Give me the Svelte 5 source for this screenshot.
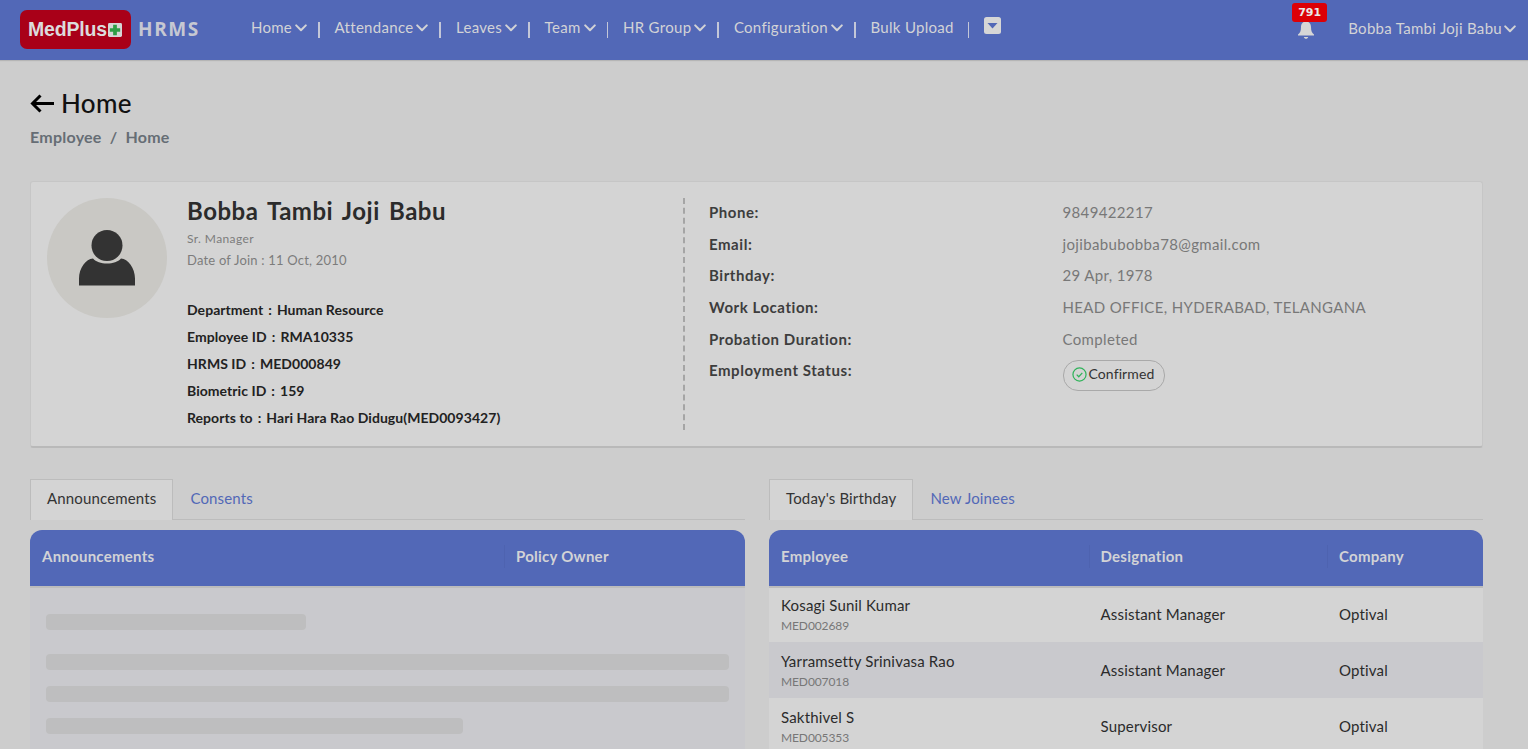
<script lang="ts">
	const menu = [
		{ label: 'Home', caret: true },
		{ label: 'Attendance', caret: true },
		{ label: 'Leaves', caret: true },
		{ label: 'Team', caret: true },
		{ label: 'HR Group', caret: true },
		{ label: 'Configuration', caret: true },
		{ label: 'Bulk Upload', caret: false }
	];

	const details = [
		['Department', 'Human Resource'],
		['Employee ID', 'RMA10335'],
		['HRMS ID', 'MED000849'],
		['Biometric ID', '159'],
		['Reports to', 'Hari Hara Rao Didugu(MED0093427)']
	];

	const contact = [
		['Phone', '9849422217'],
		['Email', 'jojibabubobba78@gmail.com'],
		['Birthday', '29 Apr, 1978'],
		['Work Location', 'HEAD OFFICE, HYDERABAD, TELANGANA'],
		['Probation Duration', 'Completed']
	];

	const birthdays = [
		{ name: 'Kosagi Sunil Kumar', id: 'MED002689', role: 'Assistant Manager', company: 'Optival' },
		{ name: 'Yarramsetty Srinivasa Rao', id: 'MED007018', role: 'Assistant Manager', company: 'Optival' },
		{ name: 'Sakthivel S', id: 'MED005353', role: 'Supervisor', company: 'Optival' }
	];
</script>

{#snippet caret()}
	<svg class="caret" viewBox="0 0 12 8" width="12" height="8">
		<path d="M1.2 1.4 6 6.2l4.8-4.8" fill="none" stroke="currentColor" stroke-width="2" stroke-linecap="round" stroke-linejoin="round" />
	</svg>
{/snippet}

<header class="navbar">
	<div class="logo">
		<span class="logo-text">MedPlus</span>
		<svg viewBox="0 0 15 15" width="14" height="14">
			<rect width="15" height="15" rx="1.5" fill="#d6d6d6" />
			<path d="M5.500 2h4v3.500H13v4H9.500V13h-4V9.500H2v-4h3.500z" fill="#2e9e45" />
		</svg>
	</div>
	<span class="hrms">HRMS</span>
	<nav class="menu">
		{#each menu as item}
			<span class="menu-item" class:plain={!item.caret}>{item.label}{#if item.caret}{@render caret()}{/if}</span>
			<span class="sep"></span>
		{/each}
		<svg class="more" viewBox="0 0 17 17" width="17" height="17">
			<rect width="17" height="17" rx="2.5" fill="#d6d6d6" />
			<path d="M3.500 6h10l-5 5.500z" fill="#5268b7" />
		</svg>
	</nav>
	<div class="bell">
		<svg viewBox="0 0 18 20" width="18" height="20">
			<path d="M9 1.500c-3.400 0-5 2.600-5 5.500 0 4-1 6-3 7.500v1h16v-1c-2-1.500-3-3.500-3-7.500 0-2.900-1.600-5.500-5-5.500z" fill="#d6d6d6" />
			<path d="M6.800 17h4.400c-.3 1.200-1.100 1.800-2.200 1.800S7.100 18.200 6.800 17z" fill="#d6d6d6" />
		</svg>
		<span class="badge">791</span>
	</div>
	<span class="user">Bobba Tambi Joji Babu{@render caret()}</span>
</header>

<main class="page">
	<h1 class="title">
		<svg viewBox="0 0 24 20" width="24" height="21">
			<path d="M24 10H2.500M10.500 2l-8 8 8 8" fill="none" stroke="#000" stroke-width="3" />
		</svg>
		Home
	</h1>
	<div class="crumbs"><span>Employee</span><span>/</span><span>Home</span></div>

	<section class="profile">
		<div class="left">
			<div class="avatar">
				<svg viewBox="0 0 56 56" width="56" height="56">
					<circle cx="28" cy="15.500" r="15.500" fill="#333" />
					<path d="M0 55.500v-7C0 38 7 29 14 28.500c3 3.500 8 5 14 5s11-1.500 14-5C49 29 56 38 56 48.500v7z" fill="#333" />
				</svg>
			</div>
			<div class="who">
				<h2>Bobba Tambi Joji Babu</h2>
				<p class="role">Sr. Manager</p>
				<p class="doj">Date of Join : 11 Oct, 2010</p>
				<ul>
					{#each details as [key, value]}
						<li>{key}<span class="colon">:</span>{value}</li>
					{/each}
				</ul>
			</div>
		</div>
		<div class="right">
			{#each contact as [key, value]}
				<div class="row">
					<span class="key">{key}:</span>
					<span class="val">{value}</span>
				</div>
			{/each}
			<div class="row">
				<span class="key">Employment Status:</span>
				<span class="pill">
					<svg viewBox="0 0 16 16" width="15" height="15">
						<circle cx="8" cy="8" r="7" fill="none" stroke="#2fb35a" stroke-width="1.300" />
						<path d="M5 8.200l2.200 2.200L11 6.200" fill="none" stroke="#2fb35a" stroke-width="1.300" />
					</svg>
					Confirmed
				</span>
			</div>
		</div>
	</section>

	<div class="columns">
		<section>
			<div class="tabs">
				<span class="tab active">Announcements</span>
				<span class="tab">Consents</span>
			</div>
			<div class="thead announce">
				<span>Announcements</span>
				<span class="cell-sep">Policy Owner</span>
			</div>
			<div class="skeleton">
				<div class="bone first"></div>
				<div class="bone"></div>
				<div class="bone"></div>
				<div class="bone short"></div>
			</div>
		</section>
		<section>
			<div class="tabs">
				<span class="tab active">Today's Birthday</span>
				<span class="tab">New Joinees</span>
			</div>
			<div class="thead people">
				<span>Employee</span>
				<span class="cell-sep">Designation</span>
				<span class="cell-sep">Company</span>
			</div>
			{#each birthdays as person, i}
				<div class="tr" class:alt={i % 2 === 1}>
					<div>
						<div class="name">{person.name}</div>
						<div class="emp-id">{person.id}</div>
					</div>
					<div>{person.role}</div>
					<div>{person.company}</div>
				</div>
			{/each}
		</section>
	</div>
</main>

<style>
	:global(body) {
		background: #cdcdcd;
		font-family: Lato, 'Noto Sans', sans-serif;
		color: #222;
		overflow: hidden;
		height: 749px;
	}

	.navbar {
		display: flex;
		align-items: flex-start;
		height: 60px;
		padding: 0 12px 0 20px;
		background: #5268b7;
		box-shadow: 0 1px 1px #b5b5b5;
		color: #d2d3d6;
	}

	.logo {
		display: flex;
		align-items: center;
		gap: 1px;
		width: 111px;
		height: 39px;
		margin-top: 10px;
		padding-left: 8px;
		box-sizing: border-box;
		background: #a90018;
		border-radius: 7px;
	}

	.logo-text {
		font-family: 'Liberation Sans', sans-serif;
		font-size: 19.500px;
		font-weight: 700;
		color: #dcdcdc;
		letter-spacing: -0.2px;
	}

	.hrms {
		font-family: 'Open Sans', sans-serif;
		font-size: 19px;
		font-weight: 700;
		letter-spacing: 1.600px;
		color: #c6c8d2;
		margin: 16px 0 0 7px;
	}

	.menu {
		display: flex;
		align-items: flex-start;
		margin: 18px 0 0 51px;
		font-size: 15px;
		line-height: 18px;
		letter-spacing: 0.3px;
	}

	.menu-item {
		display: flex;
		align-items: center;
		gap: 3px;
		white-space: nowrap;
	}

	.menu-item.plain {
		padding-right: 3px;
	}

	.caret {
		flex: none;
		margin-top: 2px;
	}

	.sep {
		width: 1.500px;
		height: 16px;
		margin: 4px 15px 0 11px;
		background: #c3c7d8;
	}

	.more {
		margin-top: -1px;
	}

	.bell {
		position: relative;
		margin: 20px 0 0 auto;
		height: 20px;
	}

	.badge {
		position: absolute;
		top: -17px;
		left: -5px;
		width: 35px;
		height: 19px;
		background: #dc0006;
		border-radius: 3px;
		color: #e8e8e8;
		font-family: 'DejaVu Sans', sans-serif;
		font-size: 11px;
		font-weight: 700;
		line-height: 20px;
		text-align: center;
	}

	.user {
		display: flex;
		align-items: center;
		gap: 2px;
		margin: 19px 0 0 33px;
		font-size: 15px;
		line-height: 18px;
		letter-spacing: 0.3px;
		white-space: nowrap;
	}

	.page {
		padding: 0 45px 0 30px;
	}

	.title {
		display: flex;
		align-items: center;
		gap: 7px;
		margin: 0;
		padding-top: 28px;
		font-size: 26px;
		line-height: 31px;
		font-weight: 500;
		letter-spacing: 0.3px;
		color: #111;
	}

	.crumbs {
		display: flex;
		gap: 8px;
		margin-top: 8px;
		font-size: 16px;
		line-height: 20px;
		font-weight: 700;
		letter-spacing: 0.25px;
		color: #666d75;
	}

	.profile {
		display: flex;
		height: 267px;
		box-sizing: border-box;
		margin-top: 34px;
		padding: 16px 0 16px 16px;
		background: #d4d4d4;
		border: 1px solid #c6c6c6;
		border-bottom: 2px solid #b9b9b9;
		border-radius: 3px;
	}

	.left {
		display: flex;
		gap: 20px;
		width: 636px;
		border-right: 2px dashed #a5a5a5;
	}

	.avatar {
		flex: none;
		display: flex;
		align-items: center;
		justify-content: center;
		width: 120px;
		height: 120px;
		border-radius: 50%;
		background: #c9c8c4;
	}

	.who h2 {
		margin: 0;
		font-size: 24px;
		line-height: 26px;
		font-weight: 700;
		letter-spacing: 0.5px;
		word-spacing: 3px;
		color: #2b2b2b;
	}

	.role {
		margin: 8px 0 0;
		font-size: 12px;
		line-height: 14px;
		letter-spacing: 0.4px;
		color: #7c7c7c;
	}

	.doj {
		margin: 6px 0 0;
		font-size: 13px;
		line-height: 16px;
		letter-spacing: 0.2px;
		color: #7c7c7c;
	}

	.who ul {
		margin: 28px 0 0;
		padding: 0;
		list-style: none;
		font-size: 14px;
		line-height: 27px;
		font-weight: 700;
		letter-spacing: 0.05px;
		color: #222;
	}

	.colon {
		margin: 0 5px;
	}

	.right {
		flex: 1;
		padding: 5px 0 0 24px;
	}

	.row {
		display: grid;
		grid-template-columns: 353.500px 1fr;
		height: 31.700px;
		align-items: start;
		font-size: 15px;
		line-height: 18px;
		letter-spacing: 0.35px;
	}

	.key {
		font-weight: 700;
		letter-spacing: 0.55px;
		color: #3d3d3d;
	}

	.val {
		color: #787878;
	}

	.pill {
		display: inline-flex;
		align-items: center;
		gap: 2px;
		justify-self: start;
		height: 26px;
		margin-top: -1px;
		padding: 0 10px 3px 8px;
		border: 1px solid #a9a9a9;
		border-radius: 15px;
		font-size: 14px;
		line-height: 26px;
		letter-spacing: 0.1px;
		color: #333;
	}

	.pill svg {
		margin-top: 1px;
	}

	.columns {
		display: grid;
		grid-template-columns: 715px 714px;
		gap: 24px;
		margin-top: 31px;
	}

	.tabs {
		display: flex;
		height: 41px;
		box-sizing: border-box;
		border-bottom: 1px solid #bcbcbc;
		font-size: 15px;
		letter-spacing: 0.15px;
	}

	.tab {
		height: 41px;
		box-sizing: border-box;
		padding: 9px 16px 0;
		line-height: 18px;
		color: #5268b7;
		border: 1px solid transparent;
		border-bottom: 0;
	}

	.tab.active {
		color: #333;
		background: #d4d4d4;
		border-color: #bcbcbc;
	}

	.thead {
		position: relative;
		display: grid;
		height: 56px;
		margin-top: 10px;
		box-sizing: border-box;
		padding-top: 15px;
		background: #5268b7;
		border-radius: 12px 12px 0 0;
		color: #d2d3d6;
		font-size: 15px;
		font-weight: 700;
		line-height: 23px;
		letter-spacing: 0.25px;
		box-shadow: 0 2px 0 #bcbcbc;
	}

	.thead span {
		align-self: start;
		padding-left: 12px;
	}

	.thead .cell-sep {
		padding-left: 11px;
		border-left: 1px solid #4e63b0;
	}

	.announce {
		grid-template-columns: 474px 1fr;
	}

	.people {
		grid-template-columns: 319.500px 238.500px 1fr;
	}

	.skeleton {
		padding: 28px 16px 0;
		height: 200px;
		background: #c9c9cd;
	}

	.bone {
		height: 16px;
		margin-bottom: 16px;
		background: #bebebf;
		border-radius: 4px;
	}

	.bone.first {
		width: 260px;
		margin-bottom: 24px;
	}

	.bone.short {
		width: 417px;
	}

	.tr {
		display: grid;
		grid-template-columns: 319.500px 238.500px 1fr;
		align-items: center;
		height: 56px;
		padding-left: 12px;
		box-sizing: border-box;
		background: #d4d4d4;
		font-size: 15px;
		letter-spacing: 0.18px;
		color: #2b2b2b;
	}

	.tr.alt {
		background: #c9c9cd;
	}

	.name {
		line-height: 18px;
	}

	.emp-id {
		margin-top: 5px;
		font-size: 12px;
		line-height: 14px;
		letter-spacing: -0.1px;
		color: #777;
	}
</style>
